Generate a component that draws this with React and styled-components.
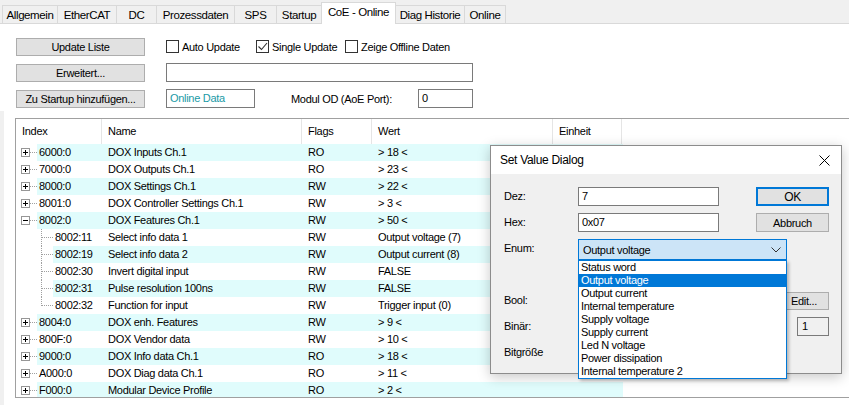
import React from 'react';
import styled, { createGlobalStyle } from 'styled-components';

const GlobalStyle = createGlobalStyle`
  html, body { margin: 0; padding: 0; background: #fff; }
  body {
    font-family: "Liberation Sans", Arial, sans-serif;
    font-size: 11px;
    letter-spacing: -0.3px;
    color: #000;
    overflow: hidden;
  }
  * { box-sizing: border-box; }
`;

const tabs = [
  ['Allgemein', 55],
  ['EtherCAT', 59],
  ['DC', 40],
  ['Prozessdaten', 78],
  ['SPS', 42],
  ['Startup', 45],
  ['CoE - Online', 74],
  ['Diag Historie', 69],
  ['Online', 41],
];

const rows = [
  { idx: '6000:0', name: 'DOX Inputs Ch.1', flags: 'RO', val: '> 18 <', exp: '+' },
  { idx: '7000:0', name: 'DOX Outputs Ch.1', flags: 'RO', val: '> 23 <', exp: '+' },
  { idx: '8000:0', name: 'DOX Settings Ch.1', flags: 'RW', val: '> 22 <', exp: '+' },
  { idx: '8001:0', name: 'DOX Controller Settings Ch.1', flags: 'RW', val: '> 3 <', exp: '+' },
  { idx: '8002:0', name: 'DOX Features Ch.1', flags: 'RW', val: '> 50 <', exp: '-' },
  { idx: '8002:11', name: 'Select info data 1', flags: 'RW', val: 'Output voltage (7)', child: true },
  { idx: '8002:19', name: 'Select info data 2', flags: 'RW', val: 'Output current (8)', child: true },
  { idx: '8002:30', name: 'Invert digital input', flags: 'RW', val: 'FALSE', child: true },
  { idx: '8002:31', name: 'Pulse resolution 100ns', flags: 'RW', val: 'FALSE', child: true },
  { idx: '8002:32', name: 'Function for input', flags: 'RW', val: 'Trigger input (0)', child: true, last: true },
  { idx: '8004:0', name: 'DOX enh. Features', flags: 'RW', val: '> 9 <', exp: '+' },
  { idx: '800F:0', name: 'DOX Vendor data', flags: 'RW', val: '> 10 <', exp: '+' },
  { idx: '9000:0', name: 'DOX Info data Ch.1', flags: 'RO', val: '> 18 <', exp: '+' },
  { idx: 'A000:0', name: 'DOX Diag data Ch.1', flags: 'RO', val: '> 11 <', exp: '+' },
  { idx: 'F000:0', name: 'Modular Device Profile', flags: 'RO', val: '> 2 <', exp: '+' },
];

const enumItems = [
  'Status word',
  'Output voltage',
  'Output current',
  'Internal temperature',
  'Supply voltage',
  'Supply current',
  'Led N voltage',
  'Power dissipation',
  'Internal temperature 2',
];

function Expander({ open }) {
  return (
    <svg width="21" height="17" viewBox="0 0 21 17">
      <rect x="5.5" y="4.5" width="8" height="8" fill="#fff" stroke="#969696" />
      <path d="M7 8.5h5" stroke="#000" />
      {!open && <path d="M9.5 6v5" stroke="#000" />}
      <path d="M14 8.5h7" stroke="#a0a0a0" strokeDasharray="1 1" />
    </svg>
  );
}

function ChildLines({ last }) {
  return (
    <svg width="37" height="17" viewBox="0 0 37 17">
      <path d={last ? 'M25.5 0v9' : 'M25.5 0v17'} stroke="#a0a0a0" strokeDasharray="1 1" />
      <path d="M26 8.5h11" stroke="#a0a0a0" strokeDasharray="1 1" />
    </svg>
  );
}

function CheckBox({ checked }) {
  return (
    <Box>
      {checked && (
        <svg width="11" height="11" viewBox="0 0 11 11">
          <path d="M1.5 5.5l3 3 5.5-6.5" fill="none" stroke="#333" strokeWidth="1.1" />
        </svg>
      )}
    </Box>
  );
}

export default function App() {
  return (
    <Window>
      <GlobalStyle />
      <TabBar>
        {tabs.map(([t, w]) => (
          <Tab key={t} w={w} active={t === 'CoE - Online'}>{t}</Tab>
        ))}
      </TabBar>

      <Controls>
        <Button>Update Liste</Button>
        <CheckRow>
          <Check w={90}><CheckBox />Auto Update</Check>
          <Check w={89}><CheckBox checked />Single Update</Check>
          <Check><CheckBox />Zeige Offline Daten</Check>
        </CheckRow>
        <Button>Erweitert...</Button>
        <TextBox w={307} />
        <Button>Zu Startup hinzufügen...</Button>
        <InlineRow>
          <TextBox w={89} teal>Online Data</TextBox>
          <FieldLabel>Modul OD (AoE Port):</FieldLabel>
          <TextBox w={55}>0</TextBox>
        </InlineRow>
      </Controls>

      <ListArea>
        <Table>
          <HeaderRow>
            <HeadCell w={86}>Index</HeadCell>
            <HeadCell w={200}>Name</HeadCell>
            <HeadCell w={70}>Flags</HeadCell>
            <HeadCell w={181}>Wert</HeadCell>
            <HeadCell w={69}>Einheit</HeadCell>
          </HeaderRow>
          {rows.map((r, i) => (
            <Row key={r.idx}>
              <Gutter>
                {r.child ? <ChildLines last={r.last} /> : <Expander open={r.exp === '-'} />}
              </Gutter>
              <Band alt={i % 2 === 0}>
                <Cell w={r.child ? 49 : 65} pad={2}>{r.idx}</Cell>
                <Cell w={200}>{r.name}</Cell>
                <Cell w={70}>{r.flags}</Cell>
                <Cell w={181}>{r.val}</Cell>
                <Cell w={70} />
              </Band>
            </Row>
          ))}
        </Table>
      </ListArea>

      <Dialog>
        <TitleBar>
          <span>Set Value Dialog</span>
          <svg width="11" height="11" viewBox="0 0 11 11">
            <path d="M0.5 0.5l10 10M10.5 0.5l-10 10" stroke="#000" strokeWidth="1" />
          </svg>
        </TitleBar>
        <DialogBody>
          <FormRow>
            <Label>Dez:</Label>
            <TextBox w={141}>7</TextBox>
            <DlgButton primary>OK</DlgButton>
          </FormRow>
          <FormRow>
            <Label>Hex:</Label>
            <TextBox w={141}>0x07</TextBox>
            <DlgButton>Abbruch</DlgButton>
          </FormRow>
          <FormRow>
            <Label>Enum:</Label>
            <Select>
              <span>Output voltage</span>
              <svg width="10" height="6" viewBox="0 0 10 6">
                <path d="M0.5 0.5l4.5 4.5 4.5-4.5" fill="none" stroke="#333" />
              </svg>
            </Select>
          </FormRow>
          <FormRow />
          <FormRow>
            <Label>Bool:</Label>
            <DlgButton small>Edit...</DlgButton>
          </FormRow>
          <FormRow>
            <Label>Binär:</Label>
            <SmallBox>1</SmallBox>
          </FormRow>
          <FormRow>
            <Label>Bitgröße</Label>
          </FormRow>

          <DropList>
            {enumItems.map((t) => (
              <DropItem key={t} selected={t === 'Output voltage'}>{t}</DropItem>
            ))}
          </DropList>
        </DialogBody>
      </Dialog>
    </Window>
  );
}

const Window = styled.div`
  position: relative;
  width: 849px;
  height: 405px;
  overflow: hidden;
  background: #fff;
`;

const TabBar = styled.div`
  display: flex;
  align-items: flex-end;
  height: 24px;
  padding-left: 3px;
  background: #f0f0f0;
  border-bottom: 1px solid #d9d9d9;
`;

const Tab = styled.div`
  position: relative;
  width: ${(p) => p.w + 1}px;
  margin-left: -1px;
  height: ${(p) => (p.active ? 22 : 18)}px;
  margin-bottom: ${(p) => (p.active ? -1 : 0)}px;
  background: ${(p) => (p.active ? '#fff' : '#f0f0f0')};
  border: 1px solid #d9d9d9;
  border-bottom: none;
  z-index: ${(p) => (p.active ? 1 : 0)};
  display: flex;
  align-items: center;
  justify-content: center;
  padding-bottom: ${(p) => (p.active ? 3 : 0)}px;
  font-size: 11.5px;
  letter-spacing: -0.4px;
  white-space: nowrap;
`;

const Controls = styled.div`
  display: grid;
  grid-template-columns: 129px 1fr;
  grid-auto-rows: 19px;
  row-gap: 7px;
  column-gap: 21px;
  align-items: center;
  padding: 13px 0 0 16px;
`;

const Button = styled.div`
  height: 18px;
  background: #e1e1e1;
  border: 1px solid #adadad;
  display: flex;
  align-items: center;
  justify-content: center;
  white-space: nowrap;
`;

const CheckRow = styled.div`
  display: flex;
  align-items: center;
`;

const Check = styled.div`
  display: flex;
  align-items: center;
  width: ${(p) => (p.w ? `${p.w}px` : 'auto')};
  white-space: nowrap;
`;

const Box = styled.div`
  width: 13px;
  height: 13px;
  border: 1px solid #333;
  background: #fff;
  margin-right: 3px;
  display: flex;
  align-items: center;
  justify-content: center;
`;

const TextBox = styled.div`
  width: ${(p) => p.w}px;
  height: 19px;
  border: 1px solid #7a7a7a;
  background: #fff;
  padding-left: 3px;
  line-height: 17px;
  color: ${(p) => (p.teal ? '#1a9aa6' : '#000')};
`;

const InlineRow = styled.div`
  display: flex;
  align-items: center;
`;

const FieldLabel = styled.div`
  width: 127px;
  margin-left: 36px;
  white-space: nowrap;
`;

const ListArea = styled.div`
  margin-top: 3px;
  padding: 7px 0 0 11px;
  border-left: 4px solid #f0f0f0;
  height: 300px;
`;

const Table = styled.div`
  width: 850px;
  height: 280px;
  border: 1px solid #a0a0a0;
  border-right: none;
  overflow: hidden;
`;

const HeaderRow = styled.div`
  display: flex;
  height: 25px;
`;

const HeadCell = styled.div`
  width: ${(p) => p.w}px;
  flex-shrink: 0;
  border-right: 1px solid #e5e5e5;
  padding-left: 6px;
  display: flex;
  align-items: center;
  padding-bottom: 1px;
`;

const Row = styled.div`
  display: flex;
  height: 17px;
`;

const Gutter = styled.div`
  display: flex;
  flex-shrink: 0;
  svg { display: block; }
`;

const Band = styled.div`
  display: flex;
  background: ${(p) => (p.alt ? '#e0fcfc' : 'transparent')};
`;

const Cell = styled.div`
  width: ${(p) => p.w}px;
  flex-shrink: 0;
  padding-left: ${(p) => (p.pad !== undefined ? p.pad : 6)}px;
  line-height: 17px;
  white-space: nowrap;
  overflow: hidden;
`;

const Dialog = styled.div`
  position: absolute;
  left: 490px;
  top: 145px;
  width: 352px;
  height: 229px;
  background: #f0f0f0;
  border: 1px solid #8c8c8c;
  box-shadow: 0 3px 12px rgba(0, 0, 0, 0.22);
`;

const TitleBar = styled.div`
  height: 28px;
  background: #fff;
  display: flex;
  align-items: center;
  justify-content: space-between;
  padding: 0 11px 0 9px;
  font-size: 12px;
  letter-spacing: -0.3px;
  svg { display: block; }
`;

const DialogBody = styled.div`
  position: relative;
  display: flex;
  flex-direction: column;
  gap: 7px;
  padding: 13px 12px 0 13px;
`;

const FormRow = styled.div`
  display: flex;
  align-items: flex-start;
  height: 19px;
`;

const Label = styled.div`
  width: 74px;
  line-height: 19px;
  flex-shrink: 0;
`;

const DlgButton = styled.div`
  margin-left: auto;
  width: ${(p) => (p.small ? 50 : 73)}px;
  height: ${(p) => (p.small ? 18 : 19)}px;
  margin-top: ${(p) => (p.small ? 1 : 0)}px;
  background: #e1e1e1;
  border: ${(p) => (p.primary ? '2px solid #0078d7' : '1px solid #adadad')};
  display: flex;
  align-items: center;
  justify-content: center;
  font-size: ${(p) => (p.primary ? 12 : 11)}px;
`;

const SmallBox = styled.div`
  margin-left: auto;
  width: 32px;
  height: 19px;
  border: 1px solid #7a7a7a;
  background: #f0f0f0;
  padding-left: 4px;
  line-height: 17px;
`;

const Select = styled.div`
  width: 209px;
  height: 21px;
  background: #cce4f7;
  border: 1px solid #0078d7;
  display: flex;
  align-items: center;
  justify-content: space-between;
  padding: 0 5px 0 4px;
  svg { display: block; }
`;

const DropList = styled.div`
  position: absolute;
  left: 87px;
  top: 86px;
  width: 209px;
  height: 119px;
  background: #fff;
  border: 1px solid #0078d7;
  box-shadow: 2px 2px 3px rgba(0, 0, 0, 0.25);
`;

const DropItem = styled.div`
  height: 13px;
  line-height: 13px;
  padding-left: 2px;
  white-space: nowrap;
  background: ${(p) => (p.selected ? '#0078d7' : 'transparent')};
  color: ${(p) => (p.selected ? '#fff' : '#000')};
`;
